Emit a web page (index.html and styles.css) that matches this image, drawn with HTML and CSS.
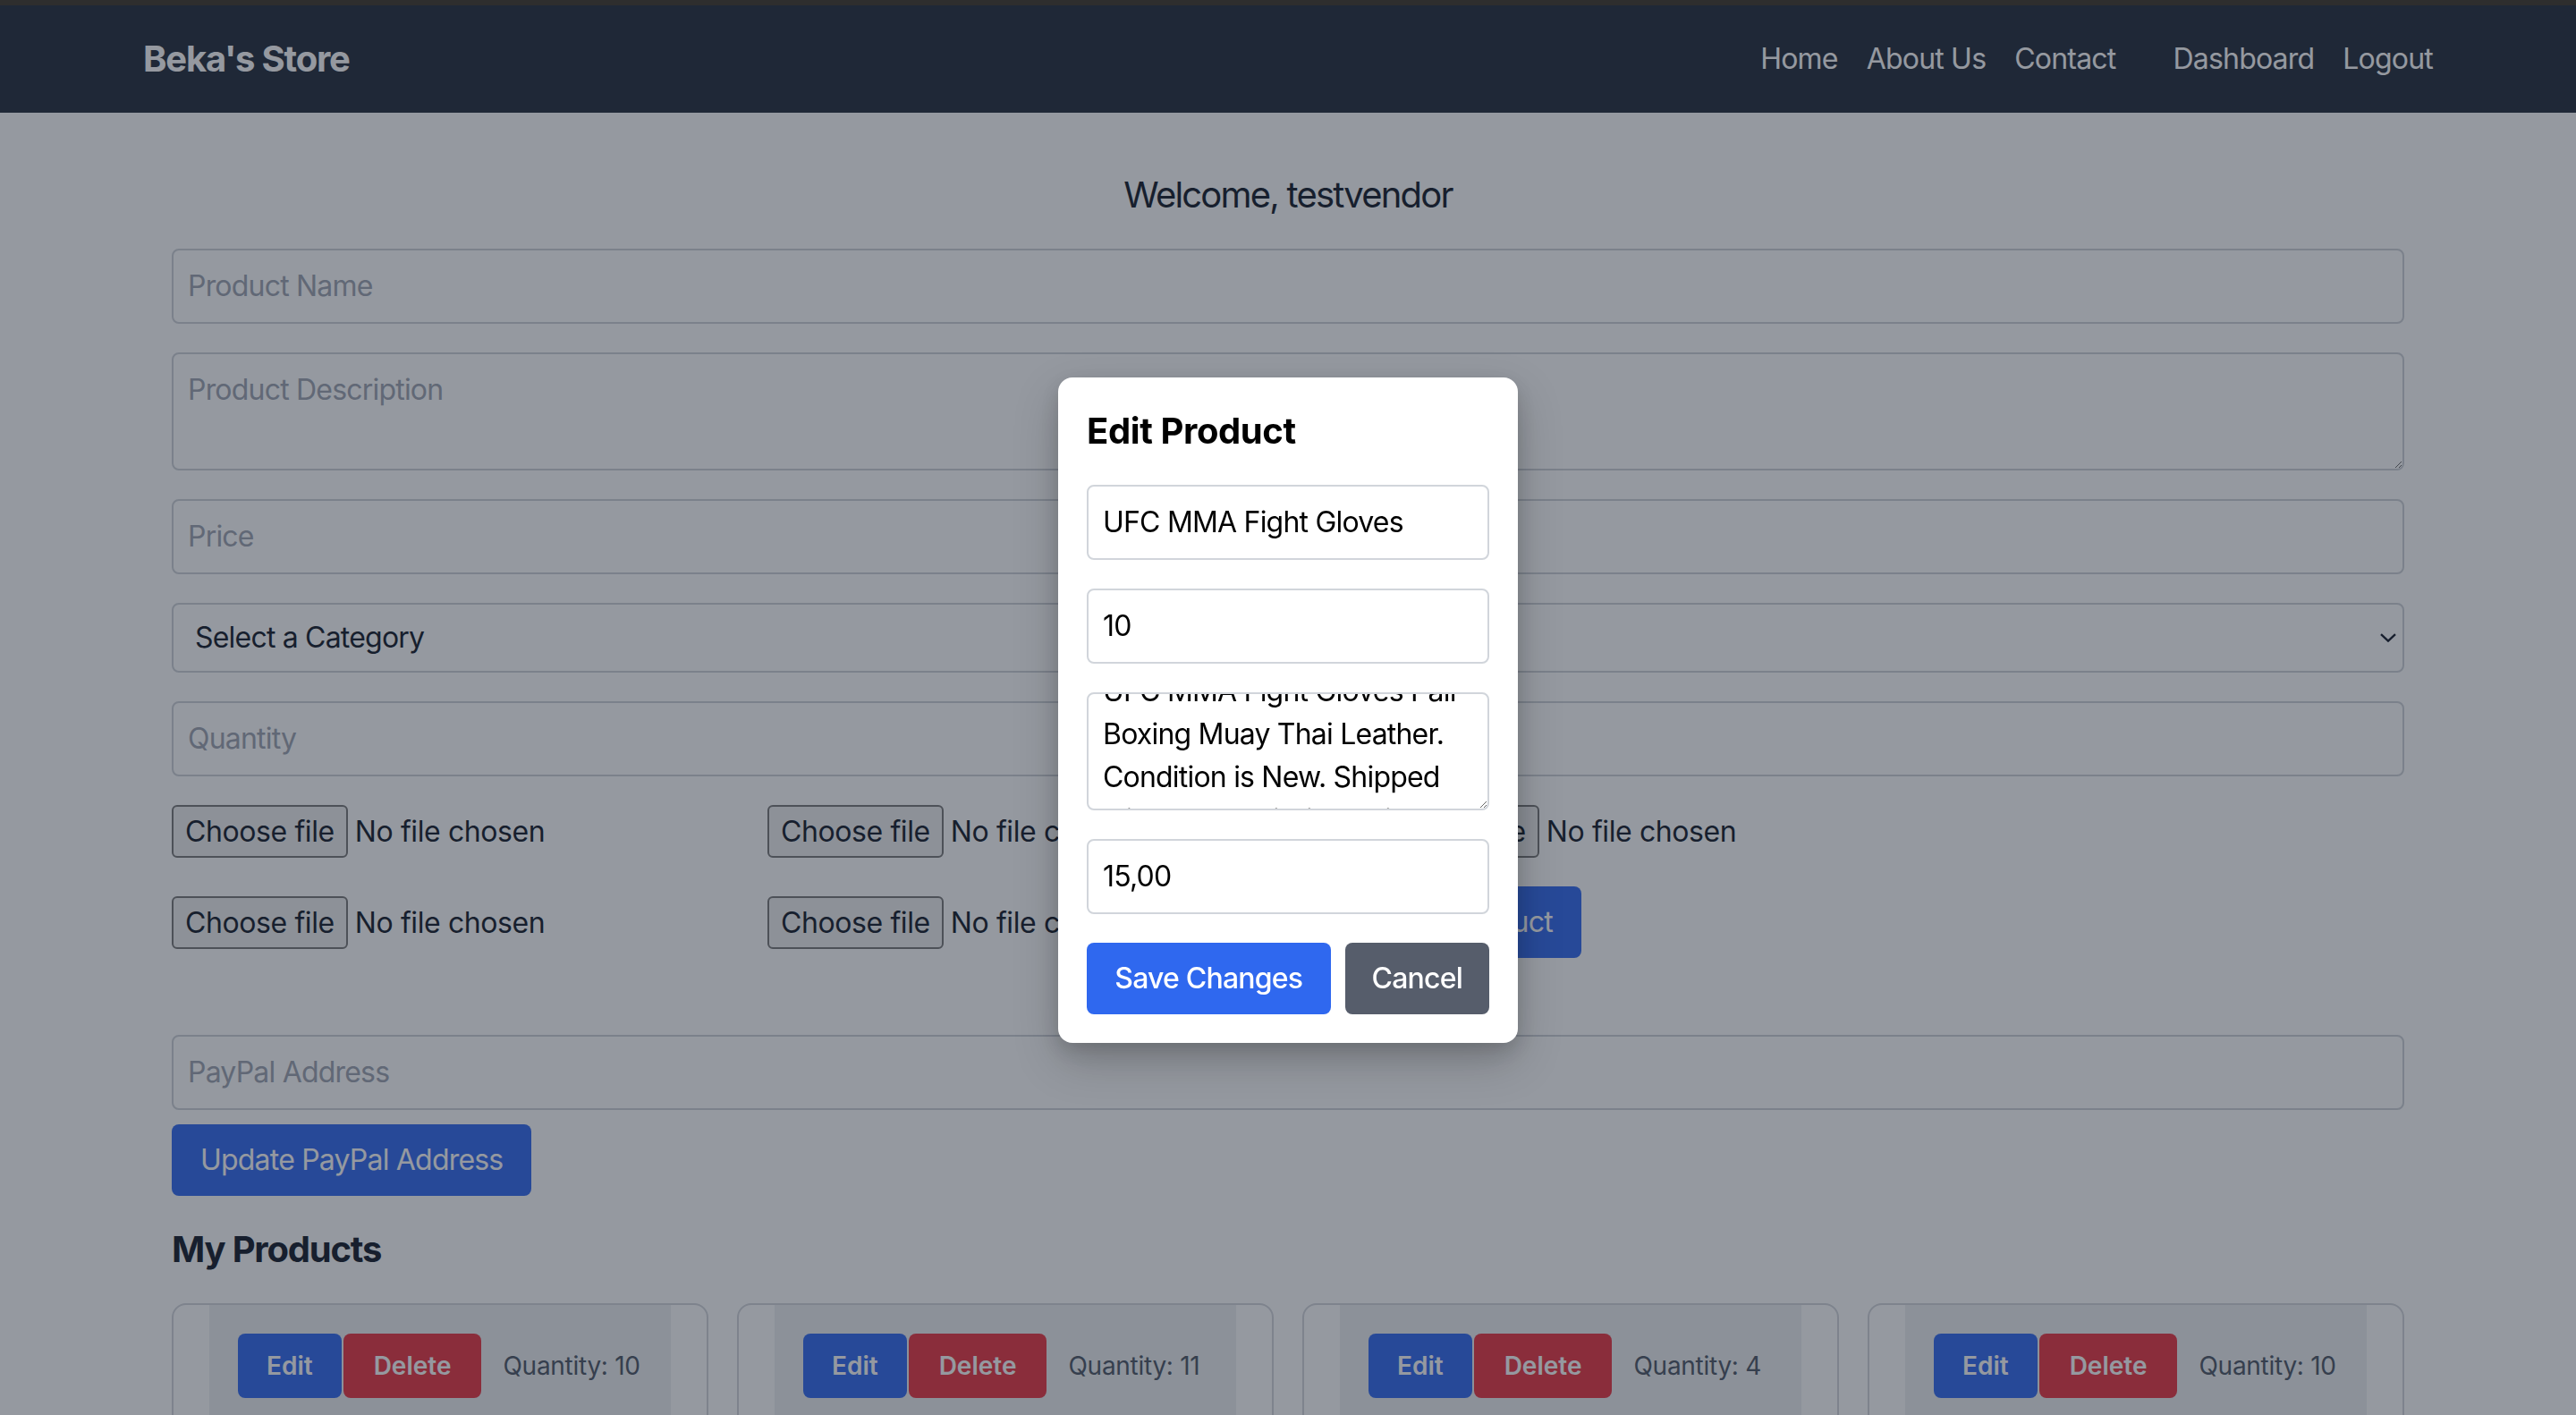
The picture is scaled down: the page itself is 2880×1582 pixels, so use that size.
FILE: index.html
```html
<!DOCTYPE html>
<html lang="en">
<head>
<meta charset="utf-8">
<title>Beka's Store – Vendor Dashboard</title>
<link rel="stylesheet" href="styles.css">
</head>
<body class="modal-open">
<nav class="navbar">
  <div class="nav-inner">
    <a class="brand" href="#">Beka's Store</a>
    <div class="nav-links">
      <a href="#">Home</a>
      <a href="#">About Us</a>
      <a href="#">Contact</a>
      <a href="#" class="nav-group">Dashboard</a>
      <a href="#">Logout</a>
    </div>
  </div>
</nav>

<main class="container">
  <h1 class="welcome">Welcome, testvendor</h1>

  <form class="product-form">
    <input class="field" type="text" placeholder="Product Name">
    <textarea class="field field-area" placeholder="Product Description"></textarea>
    <input class="field" type="text" placeholder="Price">
    <div class="select-wrap">
      <select class="field field-select">
        <option>Select a Category</option>
      </select>
      <svg class="chevron" viewBox="0 0 18 10" aria-hidden="true"><path d="M1 1.2 L9 8.6 L17 1.2" fill="none" stroke="currentColor" stroke-width="2.4"/></svg>
    </div>
    <input class="field" type="text" placeholder="Quantity">

    <div class="uploads">
      <label class="file"><span class="file-btn">Choose file</span><span class="file-name">No file chosen</span></label>
      <label class="file"><span class="file-btn">Choose file</span><span class="file-name">No file chosen</span></label>
      <label class="file"><span class="file-btn">Choose file</span><span class="file-name">No file chosen</span></label>
      <label class="file"><span class="file-btn">Choose file</span><span class="file-name">No file chosen</span></label>
      <label class="file"><span class="file-btn">Choose file</span><span class="file-name">No file chosen</span></label>
      <button type="button" class="btn btn-primary">Add Product</button>
    </div>
  </form>

  <section class="paypal">
    <input class="field" type="text" placeholder="PayPal Address">
    <button type="button" class="btn btn-primary">Update PayPal Address</button>
  </section>

  <h2 class="section-title">My Products</h2>
  <div class="products">
    <article class="card">
      <div class="card-body">
        <div class="card-actions">
          <button type="button" class="btn-sm btn-edit">Edit</button>
          <button type="button" class="btn-sm btn-delete">Delete</button>
          <span class="qty">Quantity: 10</span>
        </div>
      </div>
    </article>
    <article class="card">
      <div class="card-body">
        <div class="card-actions">
          <button type="button" class="btn-sm btn-edit">Edit</button>
          <button type="button" class="btn-sm btn-delete">Delete</button>
          <span class="qty">Quantity: 11</span>
        </div>
      </div>
    </article>
    <article class="card">
      <div class="card-body">
        <div class="card-actions">
          <button type="button" class="btn-sm btn-edit">Edit</button>
          <button type="button" class="btn-sm btn-delete">Delete</button>
          <span class="qty">Quantity: 4</span>
        </div>
      </div>
    </article>
    <article class="card">
      <div class="card-body">
        <div class="card-actions">
          <button type="button" class="btn-sm btn-edit">Edit</button>
          <button type="button" class="btn-sm btn-delete">Delete</button>
          <span class="qty">Quantity: 10</span>
        </div>
      </div>
    </article>
  </div>
</main>

<div class="modal-backdrop">
  <div class="modal">
    <h2 class="modal-title">Edit Product</h2>
    <input class="modal-field" type="text" value="UFC MMA Fight Gloves">
    <input class="modal-field" type="text" value="10">
    <textarea class="modal-field modal-area">UFC MMA Fight Gloves Pair Boxing Muay Thai Leather. Condition is New. Shipped with USPS Priority Mail.</textarea>
    <input class="modal-field" type="text" value="15,00">
    <div class="modal-actions">
      <button type="button" class="btn btn-save">Save Changes</button>
      <button type="button" class="btn btn-cancel">Cancel</button>
    </div>
  </div>
</div>
<script src="script.js"></script>
</body>
</html>
```

FILE: styles.css
```css
* { box-sizing: border-box; }

html, body { margin: 0; padding: 0; }

body {
  font-family: Inter, "Noto Sans", "Liberation Sans", sans-serif;
  background: #ffffff;
  color: #111827;
  border-top: 6px solid #2e2e2e;
}

body, input, textarea, select, button {
  letter-spacing: -0.025em;
}

body.modal-open { overflow: hidden; }

a { color: inherit; text-decoration: none; }

/* ---------- navbar ---------- */
.navbar { background: #1f2937; }

.nav-inner {
  max-width: 2560px;
  margin: 0 auto;
  padding: 32px 0;
  display: flex;
  align-items: center;
  justify-content: space-between;
}

.brand {
  color: #ffffff;
  font-size: 40px;
  line-height: 56px;
  font-weight: 700;
  letter-spacing: -0.03em;
}

.nav-links {
  display: flex;
  align-items: center;
  gap: 32px;
  color: #ffffff;
  font-size: 32px;
  line-height: 48px;
  letter-spacing: -0.025em;
}

.nav-group { margin-left: 32px; }

/* ---------- main ---------- */
.container {
  max-width: 2560px;
  margin: 64px auto 0;
  padding: 0 32px;
}

.welcome {
  margin: 0 0 32px;
  text-align: center;
  font-size: 40px;
  line-height: 56px;
  font-weight: 400;
  letter-spacing: -0.045em;
  color: #111827;
}

.field {
  display: block;
  width: 100%;
  margin: 0 0 32px;
  padding: 16px;
  border: 2px solid #cdd1d7;
  border-radius: 8px;
  background: #ffffff;
  font-family: inherit;
  font-size: 32px;
  line-height: 48px;
  color: #111827;
  outline: none;
}

.field::placeholder { color: #9ca3af; }

.field-area { height: 132px; }

.select-wrap {
  position: relative;
  margin-bottom: 32px;
  color: #111827;
}

.field-select {
  height: 78px;
  margin: 0;
  padding: 0 24px;
  appearance: none;
  -webkit-appearance: none;
}

.chevron {
  position: absolute;
  right: 9px;
  top: 50%;
  width: 18px;
  height: 10px;
  transform: translateY(-50%);
}

.uploads {
  display: flex;
  flex-wrap: wrap;
  align-items: center;
  gap: 32px;
  margin-bottom: 86px;
}

.file {
  width: 634px;
  display: flex;
  align-items: center;
  font-size: 32px;
  color: #111827;
}

.file-btn {
  padding: 8px 13px;
  line-height: 39px;
  background: #efefef;
  border: 2px solid #767676;
  border-radius: 6px;
  margin-right: 8px;
}

.btn {
  border: 0;
  border-radius: 8px;
  padding: 16px 32px;
  font-family: inherit;
  font-size: 32px;
  line-height: 48px;
  font-weight: 400;
  color: #ffffff;
  white-space: nowrap;
  cursor: pointer;
}

.btn-primary { background: #2f68ef; }

.paypal .field { margin-bottom: 16px; }

.section-title {
  margin: 32px 0;
  font-size: 40px;
  line-height: 56px;
  font-weight: 700;
  letter-spacing: -0.03em;
  color: #111827;
}

.products {
  display: grid;
  grid-template-columns: repeat(4, 1fr);
  gap: 32px;
}

.card {
  border: 2px solid #d3d6db;
  border-radius: 16px;
  padding: 0 40px;
}

.card-body {
  background: #eef0f2;
  padding: 32px;
  min-height: 560px;
}

.card-actions {
  display: flex;
  align-items: center;
}

.btn-sm {
  border: 0;
  border-radius: 8px;
  padding: 16px 32px;
  font-family: inherit;
  font-size: 28px;
  line-height: 40px;
  font-weight: 600;
  letter-spacing: 0;
  color: #ffffff;
}

.btn-edit { background: #2f68ef; }
.btn-delete { background: #ea323f; margin-left: 2px; padding: 16px 34px; }

.qty {
  margin-left: 24px;
  font-size: 28px;
  line-height: 40px;
  letter-spacing: -0.01em;
  color: #4b5563;
}

/* ---------- modal ---------- */
.modal-backdrop {
  position: fixed;
  top: 6px;
  right: 0;
  bottom: 0;
  left: 0;
  z-index: 50;
  display: flex;
  align-items: center;
  justify-content: center;
  background: rgba(31, 41, 55, 0.475);
}

.modal {
  width: 514px;
  padding: 32px;
  background: #ffffff;
  border-radius: 16px;
  box-shadow: 0 20px 50px rgba(0, 0, 0, 0.22), 0 8px 20px rgba(0, 0, 0, 0.12);
}

.modal-title {
  margin: 0 0 32px;
  font-size: 40px;
  line-height: 56px;
  font-weight: 700;
  color: #000000;
}

.modal-field {
  display: block;
  width: 100%;
  margin: 0 0 32px;
  padding: 16px;
  border: 2px solid #d1d5db;
  border-radius: 8px;
  background: #ffffff;
  font-family: inherit;
  font-size: 32px;
  line-height: 48px;
  color: #000000;
  outline: none;
}

.modal-area {
  height: 132px;
  overflow: hidden;
  resize: both;
}

.modal-actions {
  display: flex;
  gap: 16px;
}

.btn-save {
  flex: 1;
  padding: 16px 26px;
  background: #2f68ef;
  font-weight: 500;
}

.btn-cancel {
  flex: none;
  padding: 16px 30px;
  background: #565d6b;
  font-weight: 500;
}
```

FILE: script.js
```js
document.querySelector('.modal-area').scrollTop = 43;
```
